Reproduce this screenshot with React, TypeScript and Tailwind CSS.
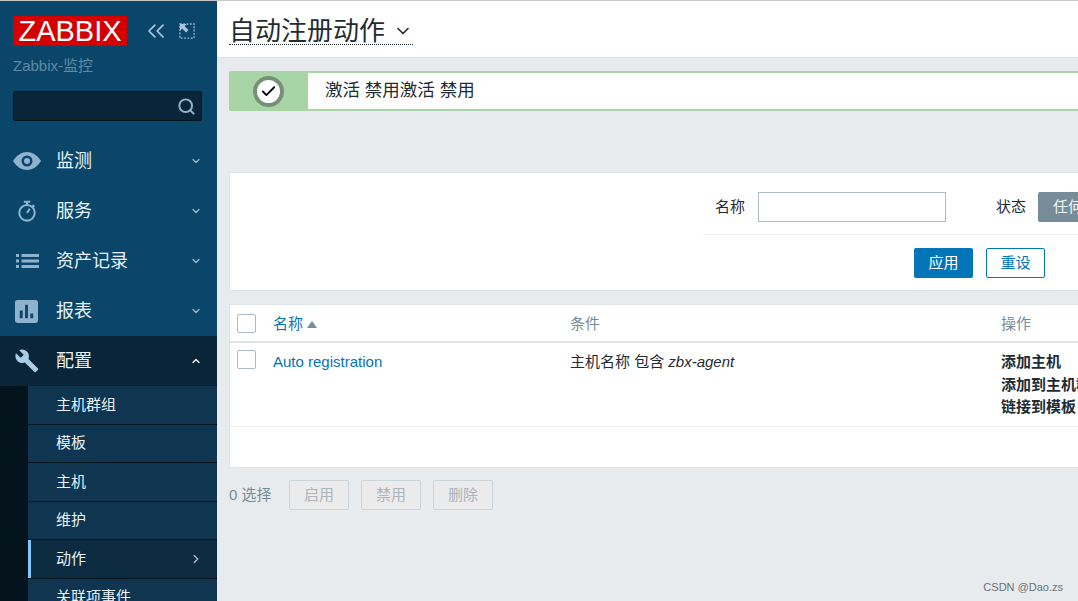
import { ChevronDown, ChevronRight, ChevronUp, ChevronsLeft, Check, Search } from "lucide-react";
import type { ReactNode } from "react";

const font = "font-['Liberation_Sans','Noto_Sans_CJK_SC',sans-serif]";

const menu: { label: string; icon: ReactNode; active?: boolean }[] = [
  {
    label: "监测",
    icon: (
      <svg viewBox="0 0 28 20" className="size-[28px]" fill="#8fb3cd">
        <path
          fillRule="evenodd"
          d="M14 1C8 1 3 5 0 10c3 5 8 9 14 9s11-4 14-9c-3-5-8-9-14-9Zm0 3.5a5.5 5.5 0 1 1 0 11 5.5 5.5 0 0 1 0-11Zm0 2.5a3 3 0 1 0 0 6 3 3 0 0 0 0-6Z"
        />
      </svg>
    ),
  },
  {
    label: "服务",
    icon: (
      <svg viewBox="0 0 24 24" className="ml-[3px] size-[22px]" fill="none" stroke="#8fb3cd" strokeWidth="2.2">
        <circle cx="12" cy="14" r="8.5" />
        <path d="M8.5 2h7M12 2v3.5M12 14l3-4.5M18 5.5l2 2" />
      </svg>
    ),
  },
  {
    label: "资产记录",
    icon: (
      <svg viewBox="0 0 24 24" className="ml-[2px] size-[24px]" fill="#8fb3cd">
        <path d="M1 5h3v3H1zM6.5 5H24v3H6.5zM1 10.5h3v3H1zM6.5 10.5H24v3H6.5zM1 16h3v3H1zM6.5 16H24v3H6.5z" />
      </svg>
    ),
  },
  {
    label: "报表",
    icon: (
      <svg viewBox="0 0 24 24" className="ml-[2px] size-[23px]" fill="#8fb3cd">
        <path
          fillRule="evenodd"
          d="M2.5 0h19A2.5 2.5 0 0 1 24 2.5v19a2.5 2.5 0 0 1-2.5 2.5h-19A2.5 2.5 0 0 1 0 21.5v-19A2.5 2.5 0 0 1 2.5 0ZM5 11v8h3v-8H5Zm5.5-6v14h3V5h-3ZM16 14v5h3v-5h-3Z"
        />
      </svg>
    ),
  },
  {
    label: "配置",
    active: true,
    icon: (
      <svg viewBox="0 0 24 24" className="ml-[2px] size-[24px]" fill="#a9cde6">
        <path d="M23 19.5 13.5 10c.9-2.5.4-5.4-1.6-7.4C9.8.5 6.7 0 4.2 1.2l4.5 4.5-3 3L1 4.2C-.2 6.7.4 9.8 2.5 11.9c2 2 4.9 2.5 7.4 1.6l9.5 9.5c.4.4 1 .4 1.4 0l2.2-2.2c.4-.5.4-1 0-1.300Z" />
      </svg>
    ),
  },
];

const subItems = ["主机群组", "模板", "主机", "维护", "动作", "关联项事件"];

function Sidebar() {
  return (
    <aside className="flex w-[217px] shrink-0 flex-col overflow-hidden bg-[#0a466a]">
      {/* Logo */}
      <div className="flex h-[45px] shrink-0 items-start pl-[13px] pt-[15px]">
        <div className="flex h-[30px] w-[114px] shrink-0 items-center justify-center bg-[#d40000] text-[29px] leading-none text-white">
          ZABBIX
        </div>
        <ChevronsLeft className="ml-[15px] mt-[1px] size-[28px] shrink-0 text-[#a9c6da]" strokeWidth={1.5} />
        <svg viewBox="0 0 18 18" className="ml-[9px] mt-[7px] size-[17px] shrink-0" fill="none">
          <rect x="1" y="1" width="15" height="15" stroke="#8fb3cd" strokeWidth="1.5" strokeDasharray="2 1.5" />
          <path d="M1 1h7L6 3.5l4 4L7.5 10l-4-4L1 8Z" fill="#a9c6da" />
        </svg>
      </div>
      <div className="mt-[10px] shrink-0 pl-[13px] text-[15px] leading-[20px] text-[#5e8aa5]">Zabbix-监控</div>
      {/* Search */}
      <div className="ml-[13px] mt-[15px] flex h-[30px] w-[189px] shrink-0 items-center justify-end rounded-[2px] border border-[#04141d] bg-[#0a2537] pr-[5px]">
        <Search className="size-[19px] text-[#8fb3cd]" strokeWidth={2.5} />
      </div>
      {/* Menu */}
      <nav className="mt-[15px] flex shrink-0 flex-col">
        {menu.map((item) => (
          <div
            key={item.label}
            className={`flex h-[50px] items-center pl-[13px] pr-[15px] ${item.active ? "bg-[#0a2537]" : ""}`}
          >
            <span className="flex w-[43px] shrink-0 justify-start">{item.icon}</span>
            <span className="flex-1 text-[18px] text-[#e8f3fa]">{item.label}</span>
            {item.active ? (
              <ChevronUp className="size-[12px] text-white" strokeWidth={2.5} />
            ) : (
              <ChevronDown className="size-[12px] text-[#9db9cc]" strokeWidth={2.5} />
            )}
          </div>
        ))}
      </nav>
      {/* Submenu */}
      <div className="flex shrink-0 flex-col bg-[#04141d] pl-[28px]">
        {subItems.map((label) => (
          <div
            key={label}
            className={`flex h-[38.5px] shrink-0 items-center border-b border-[#04141d] pl-[28px] pr-[14px] text-[15px] text-[#e8f3fa] ${
              label === "动作" ? "bg-[#0d2b40] shadow-[inset_3px_0_0_#7fc6ff]" : "bg-[#0f3550]"
            }`}
          >
            <span className="flex-1">{label}</span>
            {label === "动作" && <ChevronRight className="size-[14px] text-[#9db9cc]" strokeWidth={2.5} />}
          </div>
        ))}
      </div>
    </aside>
  );
}

function Header() {
  return (
    <header className="flex h-[57px] items-start border-b border-[#dfe4e7] bg-white pl-[12px] pt-[12px]">
      <div className="flex h-[32px] items-center border-b border-dotted border-[#1f2c33] text-[#1f2c33]">
        <span className="mt-[4px] text-[26px] leading-[32px]">自动注册动作</span>
        <ChevronDown className="ml-[8px] mt-[5px] size-[20px]" strokeWidth={2} />
      </div>
    </header>
  );
}

function Message() {
  return (
    <div className="ml-[12px] mt-[13px] flex h-[40px] w-[900px] rounded-[2px] border-y-2 border-l border-[#a8d5a6] bg-[#a8d5a6]">
      <div className="flex w-[78px] shrink-0 items-center justify-center pr-[2px]">
        <span className="flex size-[31px] items-center justify-center rounded-full border-[4px] border-[#77907a] bg-white">
          <Check className="size-[17px] text-black" strokeWidth={2.5} />
        </span>
      </div>
      <div className="flex flex-1 items-center bg-white pb-[2px] pl-[17px] text-[17.5px] text-[#1f2c33]">
        激活 禁用激活 禁用
      </div>
    </div>
  );
}

function Filter() {
  return (
    <section className="ml-[12px] mt-[61px] h-[119px] w-[900px] border border-[#dfe4e7] bg-white">
      <div className="ml-[473px] flex h-[62px] items-center border-b border-[#ebeef0] pl-[12px] pt-[7px]">
        <span className="text-[15px] text-[#1f2c33]">名称</span>
        <div className="ml-[13px] h-[30px] w-[188px] border border-[#acbbc4] bg-white" />
        <span className="ml-[50px] text-[15px] text-[#1f2c33]">状态</span>
        <div className="ml-[12px] flex h-[30px] w-[60px] items-center rounded-l-[2px] bg-[#768d99] pl-[15px] text-[15px] text-[#f2f5f7]">
          任何
        </div>
      </div>
      <div className="mt-[13px] flex pl-[684px]">
        <button className="h-[30px] w-[59px] rounded-[2px] bg-[#0275b8] text-[15px] text-white">应用</button>
        <button className="ml-[13px] h-[30px] w-[59px] rounded-[2px] border border-[#0275b8] bg-white text-[15px] text-[#0275b8]">
          重设
        </button>
      </div>
    </section>
  );
}

function CheckBox() {
  return <span className="block size-[19px] rounded-[2px] border border-[#acbbc4] bg-white" />;
}

function ActionTable() {
  return (
    <section className="ml-[12px] mt-[13px] h-[164px] w-[900px] border border-[#dfe4e7] bg-white text-[15px]">
      <div className="flex h-[38px] items-center border-b-[2px] border-[#dfe4e7]">
        <span className="ml-[7px] w-[36px]">
          <CheckBox />
        </span>
        <span className="flex w-[297px] items-center pt-[2px] text-[#0275b8]">
          名称
          <span className="ml-[4px] mt-[1px] size-0 border-x-[5px] border-b-[7px] border-x-transparent border-b-[#768d99]" />
        </span>
        <span className="w-[431px] pt-[2px] text-[#768d99]">条件</span>
        <span className="pt-[2px] text-[#768d99]">操作</span>
      </div>
      <div className="flex h-[84px] items-start border-b border-[#ebeef0] pt-[7px]">
        <span className="ml-[7px] w-[36px]">
          <CheckBox />
        </span>
        <span className="w-[297px] pt-[1px] leading-[22px] text-[#0275b8]">Auto registration</span>
        <span className="w-[431px] pt-[1px] leading-[22px] text-[#1f2c33]">
          主机名称 包含 <em>zbx-agent</em>
        </span>
        <div className="flex flex-col pt-[1px] font-bold leading-[22.5px] text-[#1f2c33]">
          <span>添加主机</span>
          <span className="whitespace-nowrap">添加到主机群组</span>
          <span className="whitespace-nowrap">链接到模板：</span>
        </div>
      </div>
    </section>
  );
}

function BottomBar() {
  return (
    <div className="ml-[12px] mt-[12px] flex items-center text-[15px]">
      <span className="w-[60px] text-[#768d99]">0 选择</span>
      {["启用", "禁用", "删除"].map((label) => (
        <button
          key={label}
          className="mr-[12px] h-[30px] w-[60px] rounded-[2px] border border-[#ccd5da] bg-[#ebebeb] text-[#aab5bc]"
        >
          {label}
        </button>
      ))}
    </div>
  );
}

export default function App() {
  return (
    <div className={`relative flex h-[601px] w-[1078px] flex-col overflow-hidden bg-[#e8ebee] ${font}`}>
      <div className="h-px shrink-0 bg-[#c8c8c8]" />
      <div className="flex min-h-0 flex-1">
        <Sidebar />
        <main className="min-w-0 flex-1 overflow-hidden">
          <Header />
          <Message />
          <Filter />
          <ActionTable />
          <BottomBar />
        </main>
      </div>
      <span className="absolute bottom-[6px] right-[15px] text-[11px] leading-[16px] text-[#6a7278]">CSDN @Dao.zs</span>
    </div>
  );
}
